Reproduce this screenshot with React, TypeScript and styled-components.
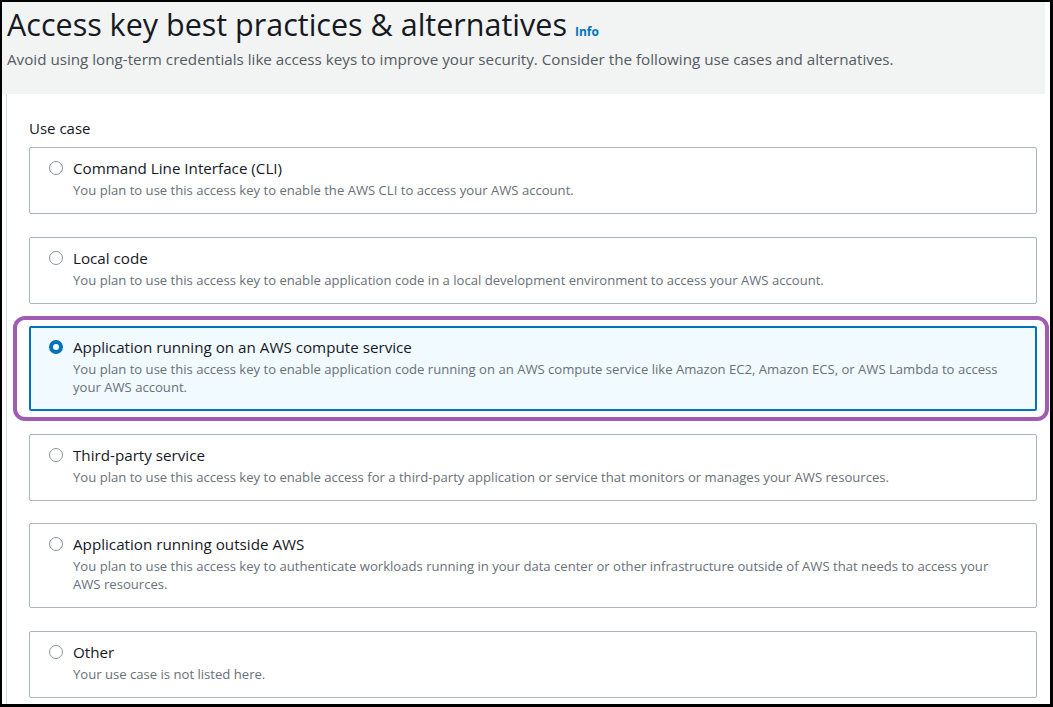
import styled, { createGlobalStyle } from "styled-components";

const GlobalStyle = createGlobalStyle`
  html, body {
    margin: 0;
    padding: 0;
    background: #ffffff;
  }
  body {
    font-family: "Open Sans", "Noto Sans", Arial, sans-serif;
    color: #16191f;
  }
  * {
    box-sizing: border-box;
  }
`;

const Frame = styled.div`
  width: 1053px;
  height: 707px;
  overflow: hidden;
  background: #ffffff;
  border-style: solid;
  border-color: #000000;
  border-width: 2px 3px 3px 2px;
  display: flex;
  flex-direction: column;
`;

const Header = styled.header`
  background: #f2f3f3;
  margin-right: 5px;
  padding: 2px 5px 25px;
`;

const Title = styled.h1`
  margin: 0 0 5px;
  height: 40px;
  font-size: 30.5px;
  line-height: 40px;
  font-weight: 400;
  color: #16191f;
  display: flex;
  align-items: baseline;
  gap: 8px;
`;

const InfoLink = styled.a`
  font-size: 12px;
  line-height: 1;
  font-weight: 700;
  color: #0073bb;
  text-decoration: none;
`;

const Subtitle = styled.p`
  margin: 0;
  font-size: 15.2px;
  line-height: 20px;
  color: #545b64;
`;

const Panel = styled.section`
  flex: 1;
  margin-left: 4px;
  border-left: 1px solid #d5dbdb;
  padding: 24px 13px 0 22px;
`;

const Label = styled.div`
  font-size: 15px;
  line-height: 20px;
  color: #16191f;
  margin-bottom: 9px;
`;

const List = styled.div`
  display: flex;
  flex-direction: column;
  gap: 22.5px;
`;

const Highlight = styled.div`
  position: relative;
  &::before {
    content: "";
    position: absolute;
    top: -10px;
    bottom: -10px;
    left: -16px;
    right: -12px;
    border: 4px solid #a05cb2;
    border-radius: 12px;
    pointer-events: none;
  }
`;

const Card = styled.label<{ $selected?: boolean }>`
  display: grid;
  grid-template-columns: 14px 1fr;
  column-gap: 10px;
  padding: ${({ $selected }) => ($selected ? "8px 18px 13px 18px" : "9px 19px 14px 19px")};
  border: ${({ $selected }) => ($selected ? "2px solid #0073bb" : "1px solid #aab7b8")};
  border-radius: 2px;
  background: ${({ $selected }) => ($selected ? "#f1faff" : "#ffffff")};
  cursor: pointer;
`;

const Radio = styled.span<{ $checked?: boolean }>`
  width: 14px;
  height: 14px;
  margin-top: 4px;
  border-radius: 50%;
  border: ${({ $checked }) => ($checked ? "4px solid #0073bb" : "1.5px solid #879596")};
  background: #ffffff;
`;

const OptionTitle = styled.div`
  font-size: 15.2px;
  line-height: 22px;
  color: #16191f;
`;

const OptionText = styled.div`
  grid-column: 2;
  margin-top: 2px;
  font-size: 13.1px;
  line-height: 18px;
  color: #687078;
`;

type Option = {
  title: string;
  text: string;
  selected?: boolean;
};

const options: Option[] = [
  {
    title: "Command Line Interface (CLI)",
    text: "You plan to use this access key to enable the AWS CLI to access your AWS account.",
  },
  {
    title: "Local code",
    text: "You plan to use this access key to enable application code in a local development environment to access your AWS account.",
  },
  {
    title: "Application running on an AWS compute service",
    text: "You plan to use this access key to enable application code running on an AWS compute service like Amazon EC2, Amazon ECS, or AWS Lambda to access your AWS account.",
    selected: true,
  },
  {
    title: "Third-party service",
    text: "You plan to use this access key to enable access for a third-party application or service that monitors or manages your AWS resources.",
  },
  {
    title: "Application running outside AWS",
    text: "You plan to use this access key to authenticate workloads running in your data center or other infrastructure outside of AWS that needs to access your AWS resources.",
  },
  {
    title: "Other",
    text: "Your use case is not listed here.",
  },
];

const OptionCard = ({ option }: { option: Option }) => (
  <Card $selected={option.selected}>
    <Radio $checked={option.selected} />
    <OptionTitle>{option.title}</OptionTitle>
    <OptionText>{option.text}</OptionText>
  </Card>
);

const App = () => {
  return (
    <>
      <GlobalStyle />
      <Frame>
        <Header>
          <Title>
            Access key best practices &amp; alternatives
            <InfoLink href="#">Info</InfoLink>
          </Title>
          <Subtitle>
            Avoid using long-term credentials like access keys to improve your security. Consider the
            following use cases and alternatives.
          </Subtitle>
        </Header>
        <Panel>
          <Label>Use case</Label>
          <List>
            {options.map((o) =>
              o.selected ? (
                <Highlight key={o.title}>
                  <OptionCard option={o} />
                </Highlight>
              ) : (
                <OptionCard key={o.title} option={o} />
              )
            )}
          </List>
        </Panel>
      </Frame>
    </>
  );
};

export default App;
